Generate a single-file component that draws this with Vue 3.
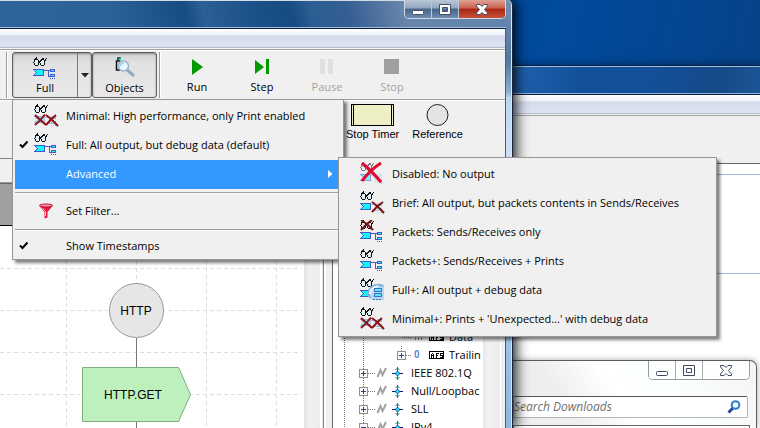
<script setup>
const outputItems = [
  { label: 'Minimal: High performance, only Print enabled', icon: 'minimal' },
  { label: 'Full: All output, but debug data (default)', icon: 'full', checked: true }
]

const advancedItems = [
  { label: 'Disabled: No output', icon: 'disabled' },
  { label: 'Brief: All output, but packets contents in Sends/Receives', icon: 'brief' },
  { label: 'Packets: Sends/Receives only', icon: 'packets' },
  { label: 'Packets+: Sends/Receives + Prints', icon: 'full' },
  { label: 'Full+: All output + debug data', icon: 'fullplus' },
  { label: "Minimal+: Prints + 'Unexpected...' with debug data", icon: 'minimal' }
]

const fields = [
  { label: 'Data', box: false },
  { label: 'Trailin', box: true }
]
const protocols = [
  { label: 'IEEE 802.1Q', open: false },
  { label: 'Null/Loopbac', open: false },
  { label: 'SLL', open: false },
  { label: 'IPv4', open: true }
]
</script>

<template>
  <div class="desktop">
    <svg class="defs" width="0" height="0" aria-hidden="true">
      <defs>
        <g id="glasses" fill="none" stroke="#111" shape-rendering="crispEdges">
          <ellipse cx="3.5" cy="5.5" rx="2.5" ry="3" fill="#e3f1fb" />
          <ellipse cx="9.5" cy="5.5" rx="2.5" ry="3" fill="#e3f1fb" />
          <path d="M1.500 4.500V3L4 .5M8 3.500L10 1.500H11M6 4.500H7M12 4V2.500L14 1.500" />
        </g>
        <g id="packet" shape-rendering="crispEdges">
          <path d="M.5 12.500H10.500V18.500H.5L3.500 15.500Z" fill="#0ff8ff" stroke="#4659c8" />
        </g>
        <g id="links" shape-rendering="crispEdges">
          <path d="M11 13.500H17M15.500 14V20M15 19.500H17" fill="none" stroke="#4659c8" />
          <rect x="17" y="12" width="5" height="3" fill="#4659c8" />
          <rect x="18" y="13" width="3" height="1" fill="#2bf3fb" />
          <rect x="17" y="17" width="5" height="3" fill="#4659c8" />
          <rect x="18" y="18" width="3" height="1" fill="#2bf3fb" />
          <path d="M17 21.500H22" stroke="#4659c8" stroke-dasharray="1 1" />
        </g>
        <g id="icon-full">
          <use href="#glasses" /><use href="#packet" /><use href="#links" />
        </g>
        <g id="icon-minimal">
          <use href="#glasses" />
          <g opacity=".4"><use href="#packet" /><use href="#links" /></g>
          <path d="M1 11L12 21M1 21Q6 17 11 10.500M12 11Q18 15 24 22M12 21Q17 15 22 11" fill="none" stroke="#8b0f14" stroke-width="2" />
        </g>
        <g id="icon-disabled">
          <g opacity=".55"><use href="#glasses" /><use href="#packet" /></g>
          <use href="#links" opacity=".15" />
          <path d="M2 2L22 21" fill="none" stroke="#777" stroke-width="2" opacity=".5" />
          <path d="M2 1Q11 8 21 20M21 1Q10 8 2 19" fill="none" stroke="#dc0c32" stroke-width="3" />
        </g>
        <g id="icon-brief">
          <use href="#glasses" /><use href="#packet" />
          <use href="#links" opacity=".3" />
          <path d="M12 11Q18 15 24 22M12 21Q17 15 23 11" fill="none" stroke="#7d1010" stroke-width="2" />
        </g>
        <g id="icon-packets">
          <use href="#icon-full" />
          <path d="M1 0Q8 4 13 10M1 10Q6 4 12 0" fill="none" stroke="#7d1010" stroke-width="2" />
        </g>
        <g id="icon-fullplus">
          <use href="#glasses" /><use href="#packet" />
          <path d="M24 7V22H11Q5 16 10 9Q16 4 24 7Z" fill="#b9d9f3" />
          <path d="M10.500 20Q6 14 11 9.500Q16 5 23 8" fill="none" stroke="#7fb0d8" stroke-width="2" />
          <path d="M10 16Q10 10 18 8" fill="none" stroke="#e8f6ff" stroke-width="2" />
          <g shape-rendering="crispEdges">
            <rect x="14.500" y="10.500" width="7" height="3" fill="#58e6f8" stroke="#3572c4" />
            <rect x="14.500" y="15.500" width="7" height="3" fill="#58e6f8" stroke="#3572c4" />
            <path d="M13 21.500H22" stroke="#3572c4" stroke-dasharray="2 1" />
          </g>
        </g>
        <g id="check"><path d="M1 4.500L3.500 7L8.500 1.500" fill="none" stroke="#000" stroke-width="2" /></g>
        <g id="win-min"><rect x=".5" y="7.500" width="11" height="4" rx="1" /></g>
        <g id="win-max"><path fill-rule="evenodd" d="M.5 1.500H11.500V11.500H.5ZM3.500 4.500V8.500H8.500V4.500Z" /></g>
        <g id="win-close"><path d="M.5 1.500H4L6 3.500L8 1.500H11.500V3L8.500 6.500L11.500 10V11.500H8L6 9.500L4 11.500H.5V10L3.500 6.500L.5 3Z" /></g>
      </defs>
    </svg>

    <section class="window rear">
      <div class="rear-title"></div>
      <div class="menubar"></div>
      <div class="rear-tools"></div>
      <div class="rear-page"><div class="rear-band"></div></div>
    </section>

    <section class="window explorer">
      <div class="explorer-caption">
        <div class="caption-buttons light">
          <button aria-label="Minimize"><svg width="12" height="13"><use href="#win-min" /></svg></button>
          <button aria-label="Maximize"><svg width="12" height="13"><use href="#win-max" /></svg></button>
          <button class="close" aria-label="Close"><svg width="12" height="13"><use href="#win-close" /></svg></button>
        </div>
      </div>
      <label class="search">
        <input type="text" placeholder="Search Downloads" aria-label="Search Downloads" />
        <svg width="14" height="14" viewBox="0 0 14 14" fill="none">
          <path d="M6 8L1.500 12.500" stroke="#24469c" stroke-width="3" />
          <circle cx="8.500" cy="5" r="3.800" fill="#f3fbff" stroke="#2f7fc9" stroke-width="2" />
        </svg>
      </label>
      <div class="explorer-list"></div>
    </section>

    <section class="window main">
      <header class="titlebar">
        <div class="caption-buttons">
          <button aria-label="Minimize"><svg width="12" height="13"><use href="#win-min" /></svg></button>
          <button aria-label="Maximize"><svg width="12" height="13"><use href="#win-max" /></svg></button>
          <button class="close" aria-label="Close"><svg width="12" height="13"><use href="#win-close" /></svg></button>
        </div>
      </header>
      <div class="client">
        <div class="menubar"></div>
        <div class="toolbar">
          <span class="rule"></span>
          <div class="pressed split">
            <button class="tool">
              <svg width="24" height="23"><use href="#icon-full" /></svg>
              <span>Full</span>
            </button>
            <button class="drop" aria-label="Output options"><svg width="8" height="5"><path d="M0 0H8L4 4.500Z" fill="#222" /></svg></button>
          </div>
          <button class="tool pressed objects">
            <svg width="24" height="23" viewBox="0 0 24 23">
              <path d="M7 13H3.500V4H7M5 3V1H8" fill="none" stroke="#111" stroke-width="1.500" />
              <path d="M5 2L8 0V4Z" fill="#22c9a4" />
              <path d="M14 13L20 18" stroke="#8fa9cc" stroke-width="3" stroke-linecap="round" />
              <circle cx="10.500" cy="9" r="5" fill="#eaf5fd" stroke="#9bb2c8" stroke-width="1.500" />
              <path d="M7.500 9Q7.500 6 10.500 6" fill="none" stroke="#8fd3ee" stroke-width="1.500" />
            </svg>
            <span>Objects</span>
          </button>
          <span class="rule"></span>
          <div class="actions">
            <button class="tool"><svg width="16" height="23"><path d="M3 3L14 11L3 19Z" fill="#009a00" /></svg><span>Run</span></button>
            <button class="tool"><svg width="16" height="23"><path d="M1 4L10 11L1 18ZM12 3H15V18H12Z" fill="#009a00" /></svg><span>Step</span></button>
            <button class="tool" disabled><svg width="16" height="23"><path d="M1 3H6V18H1ZM9 3H14V18H9Z" fill="#dfdfdf" /></svg><span>Pause</span></button>
            <button class="tool" disabled><svg width="16" height="23"><path d="M0 3H15V18H0Z" fill="#9f9f9f" /></svg><span>Stop</span></button>
          </div>
        </div>
        <div class="palette">
          <div class="shape">
            <svg width="43" height="22" shape-rendering="crispEdges"><rect x=".5" y=".5" width="42" height="21" fill="#efefc6" stroke="#000" /><path d="M2.500 1V21M40.500 1V21" stroke="#000" /></svg>
            <span>Stop Timer</span>
          </div>
          <div class="shape">
            <svg width="23" height="22"><circle cx="11.500" cy="11" r="10.500" fill="#e4e4e4" stroke="#222" /></svg>
            <span>Reference</span>
          </div>
        </div>
        <div class="workspace">
          <div class="editor">
            <div class="editor-bar"></div>
            <div class="editor-head"></div>
            <div class="editor-body">
              <svg class="canvas">
                <g stroke="#dedede" stroke-dasharray="4 3" shape-rendering="crispEdges">
                  <path d="M66.500 0V220M136.500 0V60M206.500 0V220M276.500 0V220M0 42.500H302M0 84.500H302M0 126.500H302M0 168.500H302" />
                </g>
                <path d="M136.500 112V141M136.500 196V220" stroke="#777" />
                <circle cx="136.500" cy="84.500" r="27" fill="#e6e6e6" stroke="#999" />
                <path d="M82.500 141.500H178.500L190.500 168.500L178.500 195.500H82.500Z" fill="#bdf0bd" stroke="#7fae7f" />
                <text x="136" y="89">HTTP</text>
                <text x="133" y="173">HTTP.GET</text>
              </svg>
              <div class="scrollbar"></div>
            </div>
          </div>
          <div class="splitter"></div>
          <div class="tree">
            <ul>
              <li v-for="f in fields" :key="f.label">
                <svg class="guide field" height="18">
                  <g stroke="#777" stroke-dasharray="1 1" fill="none" shape-rendering="crispEdges">
                    <path d="M11.500 0V18M30.500 0V18M68.500 0V9M68.500 9.500H79" />
                  </g>
                  <g v-if="f.box" shape-rendering="crispEdges">
                    <rect x="64.500" y="5.500" width="8" height="8" fill="#fafafa" stroke="#8e8f8f" />
                    <path d="M66 9.500H71M68.500 7V12" stroke="#30457e" />
                  </g>
                  <text v-if="f.box" class="zero" x="81" y="12">0</text>
                  <path v-else d="M82.500 5V12M85.500 5V12M88.500 5V12" stroke="#9a7bb0" />
                  <rect x="96.500" y="5.500" width="14" height="7" fill="#fff" stroke="#000" shape-rendering="crispEdges" />
                  <path d="M98.500 12V8M99 7.500H100M100.500 12V8M99 9.500H100M103.500 12V7M104 7.500H106M104 9.500H105M109.500 7.500H107.500V9.500H109.500V11.500H107" fill="none" stroke="#000" shape-rendering="crispEdges" />
                </svg>
                <span>{{ f.label }}</span>
              </li>
              <li v-for="p in protocols" :key="p.label">
                <svg class="guide" height="18">
                  <g stroke="#777" stroke-dasharray="1 1" fill="none" shape-rendering="crispEdges">
                    <path d="M11.500 0V18M30.500 0V18M35 9.500H42" />
                  </g>
                  <g shape-rendering="crispEdges">
                    <rect x="26.500" y="5.500" width="8" height="8" fill="#fafafa" stroke="#8e8f8f" />
                    <path :d="p.open ? 'M28 9.500H33' : 'M28 9.500H33M30.500 7V12'" stroke="#30457e" />
                  </g>
                  <path d="M44.500 13L47.500 6L49.500 11L53 4" fill="none" stroke="#a2a2a2" stroke-width="2" />
                  <path d="M64.500 3V16M62.500 6L64.500 4L66.500 6M62.500 13L64.500 15L66.500 13" fill="none" stroke="#128080" />
                  <path d="M59 9.500H70" stroke="#17177e" stroke-width="1" shape-rendering="crispEdges" />
                  <circle cx="64.500" cy="9.500" r="2" fill="#25d9ee" stroke="#17177e" stroke-width=".5" />
                </svg>
                <span>{{ p.label }}</span>
              </li>
            </ul>
          </div>
          <div class="tree-scroll"></div>
        </div>
      </div>
    </section>

    <nav class="menu output">
      <button v-for="item in outputItems" :key="item.label" class="item">
        <svg class="mark" width="10" height="9"><use v-if="item.checked" href="#check" /></svg>
        <svg class="icon" width="25" height="23"><use :href="'#icon-' + item.icon" /></svg>
        <span>{{ item.label }}</span>
      </button>
      <button class="item selected">
        <svg class="mark" width="10" height="9"></svg>
        <svg class="icon" width="25" height="23"></svg>
        <span>Advanced</span>
        <svg class="arrow" width="5" height="8"><path d="M0 0L4.500 4L0 8Z" fill="#fff" /></svg>
      </button>
      <hr />
      <button class="item">
        <svg class="mark" width="10" height="9"></svg>
        <svg class="icon" width="25" height="23" viewBox="0 0 25 23">
          <path d="M5 6.500Q12 4 19 6.500L13.500 13V18.500L10.500 19.500V13Z" fill="#e5163c" />
          <ellipse cx="12" cy="6.500" rx="6.500" ry="1.500" fill="#f5a0b0" stroke="#c30c2e" />
          <path d="M8.500 9L11.500 12.500V17" fill="none" stroke="#ffc5cf" />
        </svg>
        <span>Set Filter...</span>
      </button>
      <hr />
      <button class="item short">
        <svg class="mark" width="10" height="9"><use href="#check" /></svg>
        <svg class="icon" width="25" height="23"></svg>
        <span>Show Timestamps</span>
      </button>
    </nav>

    <nav class="menu advanced">
      <button v-for="item in advancedItems" :key="item.label" class="item">
        <svg class="mark" width="10" height="9"></svg>
        <svg class="icon" width="25" height="23"><use :href="'#icon-' + item.icon" /></svg>
        <span>{{ item.label }}</span>
      </button>
    </nav>
  </div>
</template>

<style>
body { overflow: hidden; }
</style>

<style scoped>
* { box-sizing: border-box; }
.desktop {
  position: relative;
  height: 100vh;
  overflow: hidden;
  background: linear-gradient(100deg, #004a9e 66%, #04458f 85%, #083f80);
  font: 11px/16px "Open Sans", "Noto Sans", sans-serif;
  color: #000;
}
.defs { position: absolute; }
button {
  border: 0;
  padding: 0;
  background: none;
  font: inherit;
  color: inherit;
}
svg { flex: none; display: block; }
.window { position: absolute; display: flex; flex-direction: column; }

.menubar {
  height: 21px;
  flex: none;
  border-bottom: 1px solid #a0a0a0;
  background: linear-gradient(#fff 0, #eef1f9 6px, #d4daed 7px, #dfe4f3 18px, #b3bacf 18px, #b3bacf 19px, #f4f4f4 19px);
}

/* rear window */
.rear {
  top: 65px;
  left: 400px;
  right: 0;
  bottom: 0;
  background: #fff;
  box-shadow: 0 0 8px rgba(0, 0, 0, 0.5);
}
.rear-title {
  height: 30px;
  flex: none;
  border-top: 1px solid #0a2348;
  border-bottom: 1px solid #0b1d3d;
  box-shadow: inset 0 1px #9dbbdc, inset 0 -1px #8fb6e0;
  background: linear-gradient(100deg, #2263ad 30%, #12509a 50%, #124f98 70%, #164a87 88%, #1c5596);
}
.rear-tools { height: 48px; flex: none; background: #f0f0f0; border-bottom: 1px solid #696969; }
.rear-page { flex: 1; padding-top: 10px; }
.rear-band { height: 100px; border: solid #a9b8e4; border-width: 1px 0; }

/* explorer window */
.explorer {
  top: 360px;
  left: 400px;
  right: 3px;
  bottom: 0;
  gap: 16px;
  padding: 0 6px 0 112px;
  border: 1px solid #5c5c5c;
  border-bottom: 0;
  border-radius: 0 7px 0 0;
  background: linear-gradient(55deg, #eee 45%, #fff 60%, #fbffff 75%, #f4f4f4);
  box-shadow: 0 0 6px rgba(0, 0, 0, 0.35);
}
.explorer-caption { display: flex; justify-content: flex-end; }
.search {
  display: flex;
  align-items: center;
  height: 22px;
  padding: 0 6px 0 0;
  margin-right: 2px;
  border: 1px solid #b5b5b5;
  border-top-color: #555;
  border-radius: 2px;
  background: #fff;
}
.search input {
  flex: 1;
  min-width: 0;
  border: 0;
  padding: 0;
  outline: 0;
  background: none;
  font: italic 12px/18px "Open Sans", sans-serif;
}
.search input::placeholder { color: #707070; opacity: 1; }
.explorer-list { flex: 1; margin-top: -9px; border: 1px solid #666; border-bottom: 0; background: #fff; }

/* caption buttons */
.caption-buttons {
  display: flex;
  height: 19px;
  border: 1px solid #d2dce8;
  border-top: 0;
  border-radius: 0 0 5px 5px;
  overflow: hidden;
  box-shadow: inset 0 0 0 1px #2d4058;
}
.caption-buttons button {
  display: grid;
  place-items: center;
  width: 27px;
  border-right: 1px solid #b9c9db;
  background: linear-gradient(#bac7d7, #93a6bf 45%, #47658a 50%, #6f8db2);
}
.caption-buttons .close {
  width: 46px;
  border: 0;
  background: linear-gradient(#dfa294, #c9614e 45%, #a82514 50%, #c9503a);
}
.caption-buttons svg { fill: #fff; stroke: #465166; }
.caption-buttons.light { border-color: #999; box-shadow: none; }
.caption-buttons.light button { border-color: #aaa; background: #fdffff; }
.caption-buttons.light svg { stroke: #454960; }

/* main window */
.main {
  top: 0;
  left: 0;
  bottom: 0;
  width: 513px;
  padding-right: 6px;
  border: solid #17263b;
  border-width: 0 1px 0 0;
  border-radius: 0 5px 0 0;
  background: linear-gradient(#7390b4 0, #54779f 60px, #8caed3 92px, #bdd7f0 98px, #d5e7f8 190px, #a5ccf0 60%, #8db8e2);
  box-shadow: 3px 0 13px rgba(0, 0, 0, 0.9), inset -1px 0 #d8e6f4;
}
.titlebar {
  display: flex;
  justify-content: flex-end;
  align-items: flex-start;
  height: 28px;
  flex: none;
  border-bottom: 1px solid #9fbddd;
  background: linear-gradient(75deg, #2e6499 0, #2d6298 110px, #184d83 182px, #2b5f95 200px, #1b5088 250px, #174c82 285px, #2c5d93 305px, #345f92 340px, #6886aa 395px, #6283ad);
  box-shadow: inset 0 1px #d2dce5;
}
.client {
  display: flex;
  flex-direction: column;
  flex: 1;
  min-height: 0;
  border-top: 1px solid #10213f;
  border-right: 1px solid #465d7a;
  background: #f0f0f0;
}
.toolbar {
  display: flex;
  align-items: stretch;
  height: 50px;
  flex: none;
  padding: 2px 0 1px 6px;
  border-bottom: 1px solid #a0a0a0;
  box-shadow: inset 0 1px #fff;
}
.rule { width: 2px; margin-right: 4px; border-left: 1px solid #9b9b9b; background: #fff; }
.tool {
  display: flex;
  flex-direction: column;
  align-items: center;
  width: 64px;
  padding-top: 4px;
}
.tool:disabled { color: #a3a3a3; }
.pressed {
  border: 1px solid #5f5f5f;
  border-radius: 3px;
  background: linear-gradient(#d2d2d2, #e2e2e2 25%, #e9e9e9);
  box-shadow: inset 0 1px 2px #888;
}
.split { display: flex; width: 80px; }
.drop { flex: 1; display: grid; place-items: center; border-left: 1px solid #777; }
.objects { width: 65px; margin-right: 2px; }
.actions { display: flex; gap: 1px; }
.palette { display: flex; gap: 13px; height: 59px; flex: none; padding: 4px 0 0 346px; border-bottom: 1px solid #808080; box-shadow: inset 0 1px #fff; }
.shape {
  display: flex;
  flex-direction: column;
  align-items: center;
  font: 11px/17px "Liberation Sans", Arial, sans-serif;
}
.workspace { display: flex; flex: 1; min-height: 0; }
.editor { display: flex; flex-direction: column; width: 320px; }
.editor-bar { height: 24px; flex: none; border-bottom: 1px solid #9a9a9a; }
.editor-head { height: 43px; flex: none; background: #a0a0a0; border: solid #696969; border-width: 1px 0; border-bottom-color: #000; }
.editor-body { display: flex; flex: 1; min-height: 0; background: #fff; }
.canvas { flex: 1; min-width: 0; height: 100%; font: 12px "Liberation Sans", Arial, sans-serif; text-anchor: middle; }
.scrollbar { width: 16px; background: linear-gradient(90deg, #e3e3e3, #f0f0f0 5px, #ededed); }
.splitter { width: 13px; border: solid #696969; border-width: 0 1px 0 0; background: linear-gradient(90deg, #fff 2px, #e8e8e8 2px, #e8e8e8 3px, #808080 3px, #808080 4px, #fff 4px, #fff 6px, #f0f0f0 6px); }
.tree { flex: 1; min-width: 0; overflow: hidden; background: #fff; }
.tree ul { margin: 0; padding: 169px 0 0; list-style: none; }
.tree li { display: flex; height: 18px; line-height: 18px; white-space: nowrap; }
.guide { width: 78px; }
.guide.field { width: 116px; }
.zero { font: bold 10px "Liberation Sans", sans-serif; fill: #6184d4; }
.tree-scroll { width: 22px; background: linear-gradient(90deg, #e8e8e8, #f2f2f2 5px, #ededed 17px, #fff 17px, #fff 18px, #f0f0f0 18px); }

/* menus */
.menu {
  position: absolute;
  display: flex;
  flex-direction: column;
  padding: 2px;
  border: 1px solid #979797;
  background: #f0f0f0;
  box-shadow: 3px 3px 3px rgba(0, 0, 0, 0.5);
}
.output { top: 99px; left: 12px; width: 332px; padding-bottom: 0; }
.advanced { top: 157px; left: 338px; width: 379px; }
.item {
  display: flex;
  align-items: center;
  height: 29px;
  padding: 0 8px 2px 4px;
  text-align: left;
  white-space: nowrap;
}
.item.short { height: 25px; }
.icon { margin: 0 7px 0 5px; }
.item.selected { background: #3399ff; color: #fff; }
.arrow { margin-left: auto; }
.menu hr { width: 100%; height: 2px; margin: 3px 0; border: 0; border-top: 1px solid #a0a0a0; background: #fff; }
</style>
